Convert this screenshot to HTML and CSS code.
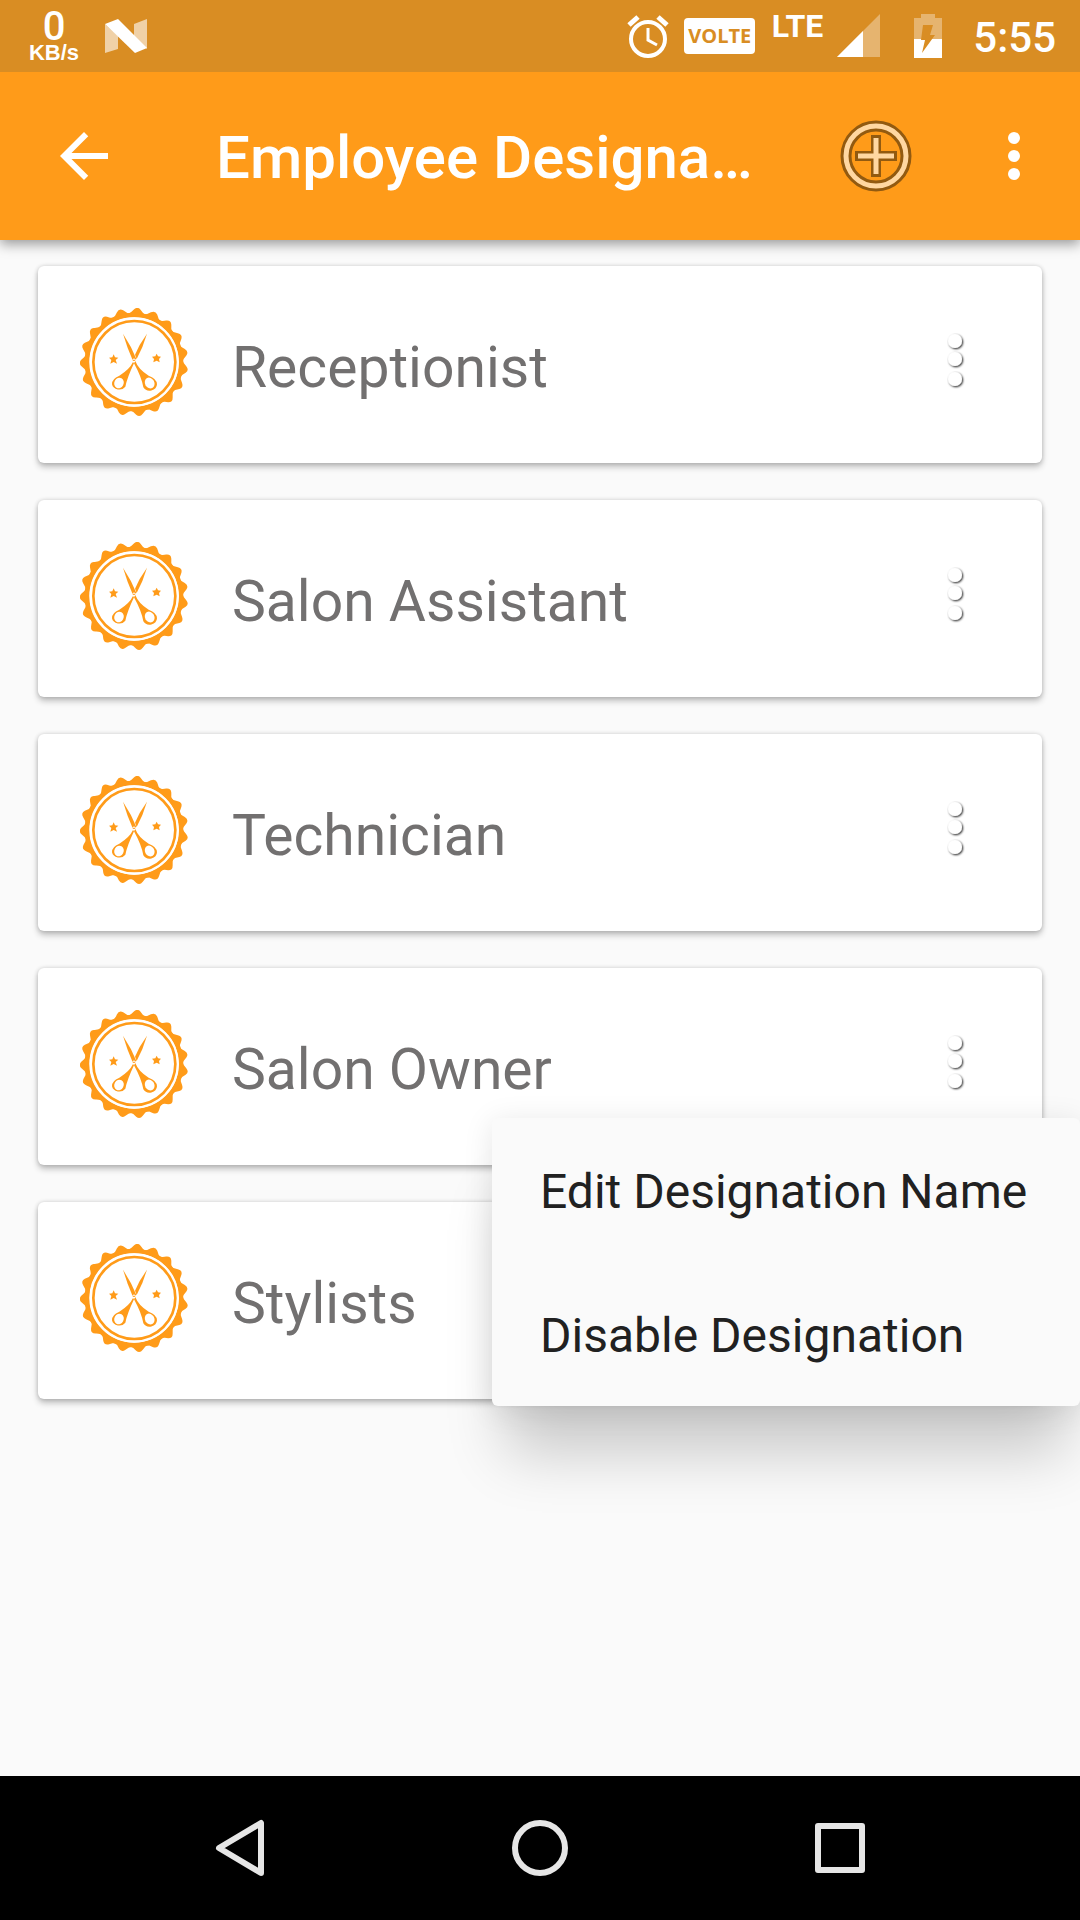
FILE: index.html
```html
<!DOCTYPE html>
<html lang="en">
<head>
<meta charset="utf-8">
<meta name="viewport" content="width=device-width, initial-scale=1">
<title>Employee Designation</title>
<link rel="stylesheet" href="styles.css">
</head>
<body>
<svg class="defs" aria-hidden="true">
  <defs>
    <path id="tooth" d="M190 77Q206 68 212 59Q222 48 232 58Q238 68 254 77Z"/>
    <symbol id="badge" viewBox="60 54 324 324">
      <g fill="#ff9b19" transform="rotate(3.5 222 216)">
        <use href="#tooth"/>
        <use href="#tooth" transform="rotate(18.95 222 216)"/>
        <use href="#tooth" transform="rotate(37.89 222 216)"/>
        <use href="#tooth" transform="rotate(56.84 222 216)"/>
        <use href="#tooth" transform="rotate(75.79 222 216)"/>
        <use href="#tooth" transform="rotate(94.74 222 216)"/>
        <use href="#tooth" transform="rotate(113.68 222 216)"/>
        <use href="#tooth" transform="rotate(132.63 222 216)"/>
        <use href="#tooth" transform="rotate(151.58 222 216)"/>
        <use href="#tooth" transform="rotate(170.53 222 216)"/>
        <use href="#tooth" transform="rotate(189.47 222 216)"/>
        <use href="#tooth" transform="rotate(208.42 222 216)"/>
        <use href="#tooth" transform="rotate(227.37 222 216)"/>
        <use href="#tooth" transform="rotate(246.32 222 216)"/>
        <use href="#tooth" transform="rotate(265.26 222 216)"/>
        <use href="#tooth" transform="rotate(284.21 222 216)"/>
        <use href="#tooth" transform="rotate(303.16 222 216)"/>
        <use href="#tooth" transform="rotate(322.11 222 216)"/>
        <use href="#tooth" transform="rotate(341.05 222 216)"/>
      </g>
      <circle cx="222" cy="216" r="141" fill="none" stroke="#ff9b19" stroke-width="14"/>
      <circle cx="223" cy="216" r="134" fill="#fff"/>
      <circle cx="223" cy="216" r="123" fill="none" stroke="#ff9b19" stroke-width="8"/>
      <g fill="#ff9b19">
        <path d="M189 131L213 172L229 207L219 213Q202 175 189 131Z"/>
        <path d="M261 131L239 165L225 194L230 207Q249 172 261 131Z"/>
        <path d="M219 216Q209 238 178 257Q155 266 156 283A22 19 0 0 0 196 290Q202 262 222 220Z"/>
        <path d="M226 213Q235 238 266 257Q291 266 291 283A22 20 0 0 1 250 292Q245 262 222 220Z"/>
        <path d="M161 193l4 9 10 1-8 7 4 11-10-5-10 5 3-11-7-7 10-1z"/>
        <path d="M290 191l4 8 9 1-6 7 2 10-9-5-10 5 2-10-6-7 10-1z"/>
      </g>
      <ellipse cx="177" cy="279" rx="14" ry="16" fill="#fff" transform="rotate(28 177 279)"/>
      <ellipse cx="269" cy="279" rx="14" ry="17" fill="#fff" transform="rotate(-28 269 279)"/>
      <circle cx="222" cy="211" r="4" fill="#ff9b19" stroke="#fff" stroke-width="3"/>
    </symbol>
    <filter id="dot-shadow" x="-50%" y="-20%" width="200%" height="140%">
      <feDropShadow dx="1" dy="1" stdDeviation="1.2" flood-color="#000" flood-opacity="0.9"/>
    </filter>
    <symbol id="dots" viewBox="0 0 48 72">
      <g fill="#fff" filter="url(#dot-shadow)">
        <circle cx="24" cy="15" r="7"/><circle cx="24" cy="33" r="7"/><circle cx="24" cy="53" r="7"/>
      </g>
    </symbol>
  </defs>
</svg>

<header class="status">
  <div class="speed"><span class="speed-value">0</span><span class="speed-unit">KB/s</span></div>
  <svg class="nougat" viewBox="0 0 42 34" width="42" height="34" aria-hidden="true">
    <path d="M0 5L13 17V30L0 34ZM29 5L42 0V30L29 17Z" fill="#fff" fill-opacity=".6"/>
    <path d="M0 5L13 0L42 29L30 34Z" fill="#fff"/>
  </svg>
  <div class="status-right">
    <svg viewBox="0 0 44 48" width="44" height="48" aria-hidden="true" fill="none" stroke="#fff">
      <circle cx="22" cy="27" r="17" stroke-width="4"/>
      <path d="M22 16V28L31 33" stroke-width="3"/>
      <path d="M3 13L12 5M41 13L32 5" stroke-width="5"/>
    </svg>
    <span class="volte">VOLTE</span>
    <span class="lte">LTE</span>
    <svg viewBox="0 0 44 44" width="44" height="44" aria-hidden="true">
      <path d="M43 0V43H0Z" fill="#fff" fill-opacity=".35"/><path d="M26 17V43H0Z" fill="#fff"/>
    </svg>
    <svg viewBox="0 0 64 44" width="64" height="44" aria-hidden="true">
      <path d="M26 0H40V4H47V25H19V4H26Z" fill="#fff" fill-opacity=".35"/>
      <path d="M19 25H47V44H19Z" fill="#fff"/>
      <path d="M28 11H38L35 21H40L27 39L30 26H26Z" fill="#d98d23"/>
    </svg>
    <time class="clock">5:55</time>
  </div>
</header>

<div class="appbar">
  <button class="icon-btn" aria-label="Back">
    <svg viewBox="0 0 24 24" width="72" height="72"><path fill="#fff" d="M20 11H7.83l5.59-5.59L12 4l-8 8 8 8 1.41-1.41L7.83 13H20v-2z"/></svg>
  </button>
  <h1 class="title">Employee Designa…</h1>
  <button class="icon-btn" aria-label="Add designation">
    <svg viewBox="0 0 72 72" width="72" height="72" fill="none">
      <circle cx="36" cy="36" r="30" stroke="#925a10" stroke-width="11"/>
      <circle cx="36" cy="36" r="30" stroke="#ffd7a1" stroke-width="5"/>
      <path d="M36 20V52M20 36H52" stroke="#925a10" stroke-width="10" stroke-linecap="square"/>
      <path d="M36 18V54M18 36H54" stroke="#ffd7a1" stroke-width="5"/>
    </svg>
  </button>
  <button class="icon-btn" aria-label="More options">
    <svg viewBox="0 0 72 72" width="72" height="72" fill="#fff"><circle cx="36" cy="18" r="6"/><circle cx="36" cy="36" r="6"/><circle cx="36" cy="54" r="6"/></svg>
  </button>
</div>

<main>
  <ul class="list">
    <li class="card">
      <svg class="badge" aria-hidden="true"><use href="#badge"/></svg>
      <span class="name">Receptionist</span>
      <button class="more" aria-label="Receptionist options"><svg><use href="#dots"/></svg></button>
    </li>
    <li class="card">
      <svg class="badge" aria-hidden="true"><use href="#badge"/></svg>
      <span class="name">Salon Assistant</span>
      <button class="more" aria-label="Salon Assistant options"><svg><use href="#dots"/></svg></button>
    </li>
    <li class="card">
      <svg class="badge" aria-hidden="true"><use href="#badge"/></svg>
      <span class="name">Technician</span>
      <button class="more" aria-label="Technician options"><svg><use href="#dots"/></svg></button>
    </li>
    <li class="card card-open">
      <svg class="badge" aria-hidden="true"><use href="#badge"/></svg>
      <span class="name">Salon Owner</span>
      <button class="more" aria-label="Salon Owner options"><svg><use href="#dots"/></svg></button>
      <div class="menu">
        <button class="menu-item">Edit Designation Name</button>
        <button class="menu-item">Disable Designation</button>
      </div>
    </li>
    <li class="card">
      <svg class="badge" aria-hidden="true"><use href="#badge"/></svg>
      <span class="name">Stylists</span>
      <button class="more" aria-label="Stylists options"><svg><use href="#dots"/></svg></button>
    </li>
  </ul>
</main>

<nav class="navbar">
  <button aria-label="Back"><svg viewBox="0 0 60 60" width="60" height="60"><path d="M51 5V55L9 30Z"/></svg></button>
  <button aria-label="Home"><svg viewBox="0 0 60 60" width="60" height="60"><circle cx="30" cy="30" r="25"/></svg></button>
  <button aria-label="Recent apps"><svg viewBox="0 0 60 60" width="60" height="60"><rect x="8" y="8" width="44" height="44"/></svg></button>
</nav>
</body>
</html>
```
FILE: styles.css
```css
* {
  box-sizing: border-box;
}

body {
  margin: 0;
  min-height: 100vh;
  display: flex;
  flex-direction: column;
  background: #fafafa;
  font-family: Roboto, sans-serif;
  overflow-x: hidden;
}

button {
  margin: 0;
  padding: 0;
  border: 0;
  background: none;
  font: inherit;
  color: inherit;
  cursor: pointer;
}

svg {
  display: block;
  flex: none;
}

.defs {
  position: absolute;
  width: 0;
  height: 0;
}

/* Status bar */
.status {
  display: flex;
  align-items: center;
  height: 72px;
  padding: 0 24px 0 28px;
  background: #d98d23;
  color: #fff;
}

.speed {
  display: flex;
  flex-direction: column;
  align-items: center;
  width: 52px;
}

.speed-value {
  font-size: 40px;
  font-weight: 500;
  line-height: 34px;
}

.speed-unit {
  font: 700 22px/18px "Liberation Sans", sans-serif;
}

.nougat {
  margin-left: 25px;
}

.status-right {
  display: flex;
  align-items: center;
  gap: 14px;
  margin-left: auto;
}

.volte {
  width: 71px;
  border-radius: 4px;
  background: #fff;
  color: #d98d23;
  font: 700 20px/36px "Open Sans", sans-serif;
  text-align: center;
}

.lte {
  align-self: flex-start;
  width: 54px;
  font-size: 32px;
  font-weight: 700;
  line-height: 32px;
  text-align: right;
}

.clock {
  padding-top: 4px;
  font-size: 42px;
  font-weight: 500;
  line-height: 48px;
}

/* App bar */
.appbar {
  position: relative;
  display: flex;
  align-items: center;
  gap: 66px;
  height: 168px;
  padding: 0 30px 0 48px;
  background: #ff9b19;
  color: #fff;
  box-shadow: 0 4px 12px rgba(0, 0, 0, 0.4);
  clip-path: inset(0 0 -24px 0);
}

.title {
  flex: 1;
  min-width: 0;
  margin: 0 0 0 30px;
  padding-top: 4px;
  overflow: hidden;
  font-size: 60px;
  font-weight: 500;
  line-height: 72px;
  text-overflow: ellipsis;
  white-space: nowrap;
}

/* Designation cards */
main {
  flex: 1;
  padding: 26px 38px;
}

.list {
  display: flex;
  flex-direction: column;
  gap: 37px;
  margin: 0;
  padding: 0;
  list-style: none;
}

.card {
  position: relative;
  display: flex;
  align-items: center;
  gap: 44px;
  padding: 42px 63px 47px 42px;
  border-radius: 6px;
  background: #fff;
  box-shadow: 0 4px 6px rgba(0, 0, 0, 0.24), 0 0 4px rgba(0, 0, 0, 0.16);
}

.card-open {
  z-index: 1;
}

.badge {
  width: 108px;
  height: 108px;
}

.name {
  flex: 1;
  padding-top: 12px;
  color: #727070;
  font-size: 57px;
  line-height: 68px;
}

.more svg {
  width: 48px;
  height: 72px;
}

.menu {
  position: absolute;
  top: 150px;
  right: -38px;
  width: 588px;
  border-radius: 6px;
  background: #fafafa;
  box-shadow: 0 62px 56px -14px rgba(0, 0, 0, 0.19), 0 4px 30px rgba(0, 0, 0, 0.1);
}

.menu-item {
  display: block;
  width: 100%;
  padding: 4px 48px 0;
  color: #212121;
  font-size: 48px;
  line-height: 140px;
  text-align: left;
  white-space: nowrap;
}

/* Navigation bar */
.navbar {
  display: flex;
  justify-content: space-around;
  height: 144px;
  padding: 0 90px;
  background: #000;
}

.navbar svg {
  fill: none;
  stroke: #e6e6e6;
  stroke-width: 6;
  stroke-linejoin: round;
}
```
